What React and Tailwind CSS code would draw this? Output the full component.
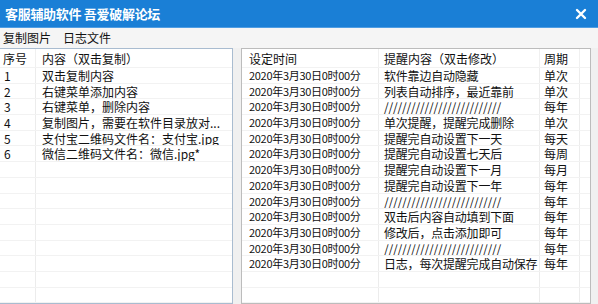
const FONT = { fontFamily: '"Noto Sans CJK SC", "Noto Sans", sans-serif' };

const leftRows = [
  ["1", "双击复制内容"],
  ["2", "右键菜单添加内容"],
  ["3", "右键菜单，删除内容"],
  ["4", "复制图片，需要在软件目录放对..."],
  ["5", "支付宝二维码文件名：支付宝.jpg"],
  ["6", "微信二维码文件名：微信.jpg*"],
];

const slashes = "//////////////////////////";

const rightRows = [
  ["软件靠边自动隐藏", "单次"],
  ["列表自动排序，最近靠前", "单次"],
  [slashes, "每年"],
  ["单次提醒，提醒完成删除", "单次"],
  ["提醒完自动设置下一天", "每天"],
  ["提醒完自动设置七天后", "每周"],
  ["提醒完自动设置下一月", "每月"],
  ["提醒完自动设置下一年", "每年"],
  [slashes, "每年"],
  ["双击后内容自动填到下面", "每年"],
  ["修改后，点击添加即可", "每年"],
  [slashes, "每年"],
  ["日志，每次提醒完成自动保存", "每年"],
];

function LeftRow({ no, text }) {
  return (
    <div className="flex h-[15.7px] border-b border-[#f2f2f2] text-[12px] leading-[15px] text-[#111]">
      <div className="w-[36px] shrink-0 border-r border-[#ececec] pl-[4px]">{no}</div>
      <div className="flex-1 pl-[6px] whitespace-nowrap overflow-hidden">{text}</div>
    </div>
  );
}

function RightRow({ date, text, period }) {
  return (
    <div className="flex h-[15.7px] border-b border-[#f2f2f2] text-[12px] leading-[15px] text-[#111]">
      <div className="w-[137px] shrink-0 border-r border-[#ececec] pl-[7px] text-[11px] tracking-[-0.3px] whitespace-nowrap">
        {date}
      </div>
      <div className="w-[161px] shrink-0 border-r border-[#ececec] pl-[5px] tracking-[-0.2px] whitespace-nowrap overflow-hidden">
        {text}
      </div>
      <div className="w-[40px] shrink-0 border-r border-[#ececec] pl-[4px]">{period}</div>
      <div className="flex-1" />
    </div>
  );
}

export default function App() {
  const leftEmpty = Array.from({ length: 10 });
  const rightEmpty = Array.from({ length: 3 });
  return (
    <div className="w-[598px] h-[304px] overflow-hidden bg-[#f0f0f0] flex flex-col" style={FONT}>
      <div className="h-[28px] shrink-0 bg-[#1a7fd6] border-b border-[#4f9de3] flex items-center justify-between px-[5px]">
        <span className="text-white font-bold text-[13px] tracking-[-0.3px]">客服辅助软件 吾爱破解论坛</span>
        <svg width="12" height="12" viewBox="0 0 12 12" className="mr-[6px]">
          <path d="M2 2 L10 10 M10 2 L2 10" stroke="#fff" strokeWidth="2.4" strokeLinecap="round" />
        </svg>
      </div>

      <div className="h-[20px] shrink-0 bg-[#f5f5f5] flex items-center gap-[12px] px-[3px] text-[12px] text-[#111]">
        <span>复制图片</span>
        <span>日志文件</span>
      </div>

      <div className="flex-1 flex gap-[8px] pr-[7px] min-h-0">
        <div className="w-[233px] shrink-0 bg-white border border-l-0 border-[#a9bcd0] overflow-hidden">
          <div className="flex h-[19px] text-[12px] leading-[19px] text-[#111] border-b border-[#f2f2f2]">
            <div className="w-[36px] shrink-0 border-r border-[#f0f0f0] pl-[3px]">序号</div>
            <div className="flex-1 pl-[6px]">内容（双击复制）</div>
          </div>
          {leftRows.map(([no, text]) => (
            <LeftRow key={no} no={no} text={text} />
          ))}
          {leftEmpty.map((_, i) => (
            <LeftRow key={"e" + i} no="" text="" />
          ))}
        </div>

        <div className="flex-1 bg-white border border-[#bcbcbc] overflow-hidden">
          <div className="flex h-[19px] text-[12px] leading-[19px] text-[#111] border-b border-[#f2f2f2]">
            <div className="w-[137px] shrink-0 border-r border-[#f0f0f0] pl-[7px]">设定时间</div>
            <div className="w-[161px] shrink-0 border-r border-[#f0f0f0] pl-[5px]">提醒内容（双击修改）</div>
            <div className="w-[40px] shrink-0 border-r border-[#f0f0f0] pl-[4px]">周期</div>
            <div className="flex-1" />
          </div>
          {rightRows.map(([text, period], i) => (
            <RightRow key={i} date="2020年3月30日0时00分" text={text} period={period} />
          ))}
          {rightEmpty.map((_, i) => (
            <RightRow key={"e" + i} date="" text="" period="" />
          ))}
        </div>
      </div>
    </div>
  );
}
